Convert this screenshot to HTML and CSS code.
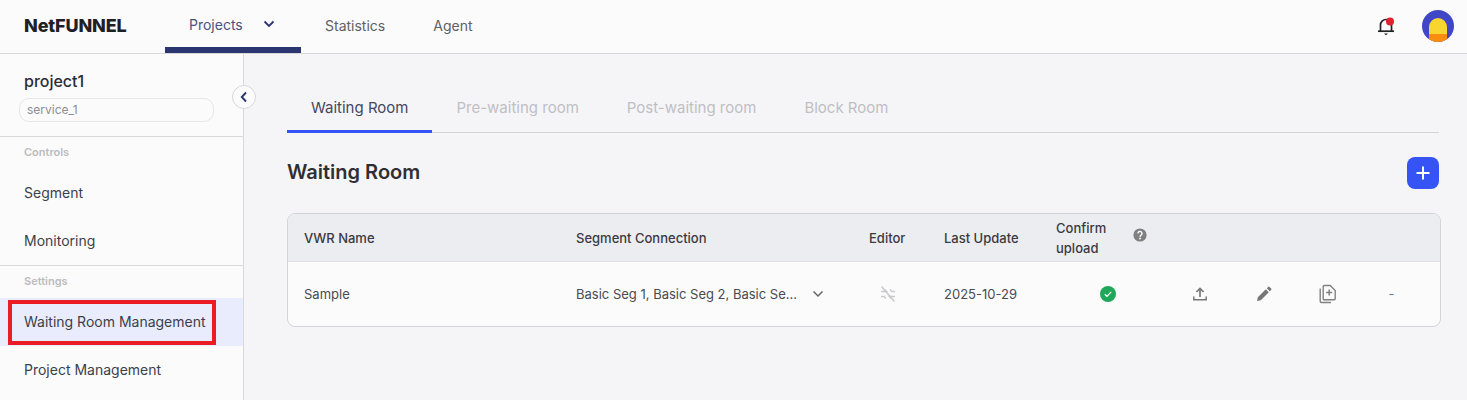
FILE: index.html
```html
<!DOCTYPE html>
<html lang="en">
<head>
<meta charset="utf-8">
<title>NetFUNNEL</title>
<link rel="stylesheet" href="styles.css">
</head>
<body>
<div class="app">
  <header class="topbar">
    <div class="logo">NetFUNNEL</div>
    <nav class="topnav">
      <a class="topnav-item active">Projects
        <svg class="nav-chev" width="12" height="8" viewBox="0 0 12 8"><path d="M1.5 1.5 6 6l4.5-4.5" fill="none" stroke="#2b3570" stroke-width="1.8"/></svg>
      </a>
      <a class="topnav-item">Statistics</a>
      <a class="topnav-item">Agent</a>
    </nav>
    <div class="top-actions">
      <span class="bell">
        <svg width="20" height="22" viewBox="0 0 20 22"><path d="M4.5 16V10a5.5 5.5 0 0 1 11 0v6" fill="none" stroke="#222" stroke-width="1.7"/><path d="M2 16.2h16" stroke="#222" stroke-width="1.7"/><path d="M8 18.6h4L10 20.2z" fill="#222"/><circle cx="14" cy="6.5" r="4" fill="#e5202e"/></svg>
      </span>
      <span class="avatar"><span class="avatar-body"></span></span>
    </div>
  </header>
  <div class="layout">
    <aside class="sidebar">
      <div class="project">
        <div class="project-name">project1</div>
        <div class="service">service_1</div>
      </div>
      <button class="collapse">
        <svg width="8" height="12" viewBox="0 0 8 12"><path d="M6 1.5 1.8 6 6 10.5" fill="none" stroke="#2b3570" stroke-width="1.9"/></svg>
      </button>
      <section class="side-group">
        <div class="side-label">Controls</div>
        <a class="side-item">Segment</a>
        <a class="side-item">Monitoring</a>
      </section>
      <section class="side-group">
        <div class="side-label">Settings</div>
        <a class="side-item current">Waiting Room Management<span class="highlight"></span></a>
        <a class="side-item">Project Management</a>
      </section>
    </aside>
    <main class="content">
      <div class="tabs">
        <a class="tab selected">Waiting Room</a>
        <a class="tab">Pre-waiting room</a>
        <a class="tab">Post-waiting room</a>
        <a class="tab">Block Room</a>
      </div>
      <div class="title-row">
        <h1 class="title">Waiting Room</h1>
        <button class="add">
          <svg width="16" height="16" viewBox="0 0 16 16"><path d="M8 1.5v13M1.5 8h13" stroke="#fff" stroke-width="2"/></svg>
        </button>
      </div>
      <div class="table">
        <div class="row head">
          <div class="cell first">VWR Name</div>
          <div class="cell">Segment Connection</div>
          <div class="cell">Editor</div>
          <div class="cell">Last Update</div>
          <div class="cell confirm">Confirm<br>upload
            <svg class="help" width="14" height="14" viewBox="0 0 14 14"><circle cx="7" cy="7" r="6.6" fill="#808080"/><path d="M5 5.4a2 2 0 1 1 3.2 1.6c-.8.6-1.2.9-1.2 1.7" fill="none" stroke="#fff" stroke-width="1.4"/><circle cx="7" cy="10.5" r=".9" fill="#fff"/></svg>
          </div>
          <div class="cell"></div><div class="cell"></div><div class="cell"></div><div class="cell"></div>
        </div>
        <div class="row body">
          <div class="cell first">Sample</div>
          <div class="cell seg"><span>Basic Seg 1, Basic Seg 2, Basic Se...</span>
            <svg width="12" height="8" viewBox="0 0 12 8"><path d="M1.5 1.5 6 6l4.5-4.5" fill="none" stroke="#666" stroke-width="1.5"/></svg>
          </div>
          <div class="cell">
            <svg class="editor-icon" width="18" height="18" viewBox="0 0 18 18"><g fill="none" stroke="#c9c9cc" stroke-width="1.5"><path d="M2 6.5h5.5L5.5 4.5M16 11.5h-5.5l2 2"/><path d="M2 11.5l3 0 2 2M16 6.5h-3l-2-2"/><path d="M2.5 1.5l13 15"/></g></svg>
          </div>
          <div class="cell">2025-10-29</div>
          <div class="cell status">
            <svg width="16" height="16" viewBox="0 0 16 16"><circle cx="8" cy="8" r="8" fill="#1fa85a"/><path d="M4.8 8.2 7 10.3l4.2-4.4" fill="none" stroke="#fff" stroke-width="1.2"/></svg>
          </div>
          <div class="cell action">
            <svg width="16" height="16" viewBox="0 0 16 16"><path d="M8 11V2.5M4.4 6 8 2.4 11.6 6" fill="none" stroke="#777" stroke-width="1.7"/><path d="M1.8 10.5v3.2h12.4v-3.2" fill="none" stroke="#777" stroke-width="1.5"/></svg>
          </div>
          <div class="cell action">
            <svg width="16" height="16" viewBox="0 0 16 16"><path d="M1 15l.8-3.8 8-8 3 3-8 8zM10.8 2.2l1.3-1.3a1 1 0 0 1 1.4 0l1.6 1.6a1 1 0 0 1 0 1.4l-1.3 1.3z" fill="#777"/></svg>
          </div>
          <div class="cell action">
            <svg width="18" height="20" viewBox="0 0 18 20"><g fill="none" stroke="#808080" stroke-width="1.4"><path d="M5.2 1.5h6l5 5v8.2a1 1 0 0 1-1 1h-10a1 1 0 0 1-1-1V2.5a1 1 0 0 1 1-1z"/><path d="M1.2 4.5v12.7a1.3 1.3 0 0 0 1.3 1.3h9.5"/><path d="M10.2 5.6v6M7.2 8.6h6" stroke-width="1.5"/></g></svg>
          </div>
          <div class="cell action dash">-</div>
        </div>
      </div>
    </main>
  </div>
</div>
</body>
</html>
```
FILE: styles.css
```css
* { box-sizing: border-box; }
html, body { margin: 0; height: 100%; overflow: hidden; }
body { font-family: Inter, "Liberation Sans", sans-serif; color: #333; background: #f5f5f8; }
a { display: block; }
.app { display: flex; flex-direction: column; height: 400px; }

.topbar { flex: 0 0 54px; display: flex; align-items: stretch; background: #fbfbfb; border-bottom: 1px solid #d8d8da; padding-left: 24px; }
.logo { width: 141px; font-size: 18px; font-weight: 800; line-height: 52px; color: #1f2025; letter-spacing: -0.15px; }
.topnav { display: flex; }
.topnav-item { display: flex; align-items: center; font-size: 14px; color: #5f6066; padding: 0 24px; height: 53px; padding-bottom: 2px; }
.topnav-item.active { width: 136px; color: #4a5180; border-bottom: 6px solid #2b3570; padding-bottom: 0; padding-top: 1px; margin-bottom: 0; }
.topnav-item.active { height: 53px; }
.nav-chev { margin-left: 20px; }
.top-actions { margin-left: auto; display: flex; align-items: center; padding: 0 13px 2px 0; gap: 26px; }
.bell { display: block; width: 20px; height: 22px; }
.avatar { position: relative; display: block; width: 32px; height: 32px; border-radius: 50%; background: #3f47c6; overflow: hidden; }
.avatar-body { position: absolute; left: 7px; top: 8px; width: 18px; height: 24px; border-radius: 9px 9px 0 0; background: linear-gradient(#f8d62f 0 16px, #f98d10 16px); }

.layout { flex: 1; display: flex; min-height: 0; }
.sidebar { position: relative; flex: 0 0 244px; background: #fbfbfb; border-right: 1px solid #d8d8da; }
.project { height: 83px; padding: 17px 0 0 19px; border-bottom: 1px solid #d8d8da; }
.project-name { font-size: 16px; font-weight: 500; line-height: 20px; color: #2a2d38; padding-left: 5px; }
.service { width: 195px; height: 24px; margin-top: 7px; padding-left: 7px; font-size: 12px; line-height: 22px; color: #8d8d93; border: 1px solid #e6e6e8; border-radius: 10px; }
.collapse { position: absolute; right: -13px; top: 31px; width: 24px; height: 24px; padding: 0; display: flex; align-items: center; justify-content: center; background: #fbfbfb; border: 1px solid #d8d8da; border-radius: 50%; }
.side-group { border-bottom: 1px solid #d8d8da; }
.side-group:last-of-type { border-bottom: 0; }
.side-label { height: 32px; padding-left: 24px; font-size: 11px; font-weight: 600; line-height: 31px; color: #bcbcc0; }
.side-item { position: relative; height: 48px; padding-left: 24px; font-size: 14px; line-height: 47px; color: #3c3f4a; }
.side-item.current { background: #e9ecfd; }
.highlight { position: absolute; left: 8px; top: 2px; width: 208px; height: 45px; border: 4px solid #ea1c24; }

.content { flex: 1; min-width: 0; padding: 32px 26px 0 43px; }
.tabs { display: flex; height: 47px; margin-right: 2px; border-bottom: 1px solid #d4d4d8; }
.tab { height: 47px; padding: 0 24px; font-size: 15px; line-height: 44px; color: #bfbfc4; }
.tab.selected { color: #454660; border-bottom: 3px solid #3654f5; line-height: 43px; }
.title-row { display: flex; justify-content: space-between; align-items: center; height: 32px; margin: 24px 2px 0 0; }
.title { margin: 0; font-size: 20px; font-weight: 600; line-height: 28px; color: #2f2f33; padding-bottom: 2px; }
.add { width: 32px; height: 32px; padding: 0; display: flex; align-items: center; justify-content: center; background: #3654f5; border: 0; border-radius: 8px; }

.table { margin-top: 24px; height: 114px; background: #fbfbfb; border: 1px solid #d4d4d8; border-radius: 8px; overflow: hidden; }
.row { display: grid; grid-template-columns: 288px 293px 75px 112px 112px 64px 64px 64px 63px; align-items: center; font-size: 13px; }
.row.head { height: 48px; background: #ecedf1; border-bottom: 1px solid #e2e2e6; font-weight: 500; color: #3a3a40; line-height: 20px; }
.row.body { height: 64px; color: #4a4a50; }
.cell { min-width: 0; }
.first { padding-left: 16px; }
.confirm { position: relative; }
.help { position: absolute; left: 77px; top: 10px; }
.seg { display: flex; align-items: center; gap: 15px; white-space: nowrap; }
.editor-icon { display: block; margin-left: 10px; }
.status svg { display: block; margin-left: 44px; }
.action { display: flex; justify-content: center; }
.dash { color: #777; }
```
